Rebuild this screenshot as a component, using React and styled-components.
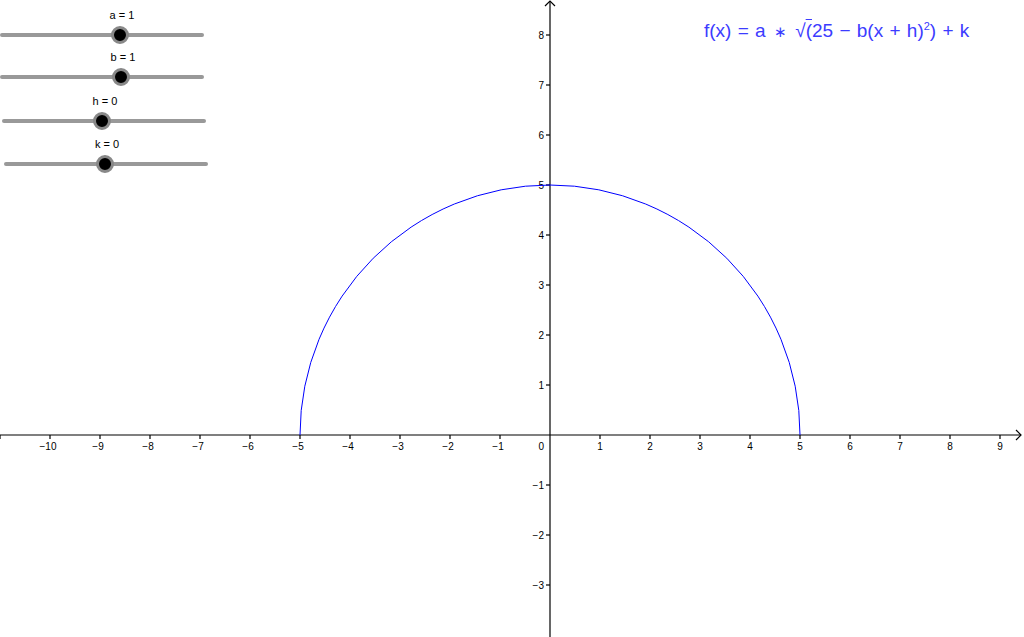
import React from 'react';
import styled, { createGlobalStyle } from 'styled-components';

const Global = createGlobalStyle`
    html, body { margin: 0; padding: 0; background: #fff; }
    body { font-family: "Liberation Sans", Arial, sans-serif; overflow: hidden; }
`;

const Board = styled.div`
    position: relative;
    width: 1024px;
    height: 637px;
    background: #fff;
    overflow: hidden;
`;

const Graph = styled.svg`
    display: block;
`;

const Slider = styled.div`
    position: absolute;
    left: ${p => p.x}px;
    top: ${p => p.y}px;
    width: 204px;
    height: 4px;
    border-radius: 2px;
    background: #999;
`;

const Label = styled.div`
    position: absolute;
    left: ${p => p.at}px;
    top: -24px;
    transform: translateX(-50%);
    font-size: 11px;
    color: #000;
    white-space: nowrap;
`;

const Thumb = styled.div`
    position: absolute;
    left: ${p => p.at}px;
    top: 2px;
    width: 12px;
    height: 12px;
    margin: -9px 0 0 -9px;
    border-radius: 50%;
    background: #000;
    border: 3px solid #888;
`;

const Formula = styled.div`
    position: absolute;
    left: 704px;
    top: 20px;
    font-family: "Liberation Sans", Arial, sans-serif;
    font-size: 19px;
    word-spacing: 1px;
    color: #3c3cff;
    white-space: nowrap;
    sup { font-size: 11px; }
`;

const Star = styled.span`
    font-size: 15px;
    padding: 0 2px;
`;

const Root = styled.span`
    text-decoration: overline;
    text-decoration-thickness: 1px;
`;

const sliders = [
    { name: 'a = 1', x: 0, y: 33, at: 120, label: 122 },
    { name: 'b = 1', x: 0, y: 75, at: 121, label: 123 },
    { name: 'h = 0', x: 2, y: 119, at: 102, label: 105 },
    { name: 'k = 0', x: 4, y: 162, at: 105, label: 107 },
];

const OX = 550;
const OY = 435;
const U = 50;

const App = () => {
    const xs = [];
    for (let i = -11; i <= 9; i++) if (i !== 0) xs.push(i);
    const ys = [];
    for (let i = -3; i <= 8; i++) if (i !== 0) ys.push(i);
    const minus = n => (n < 0 ? '\u2212' + Math.abs(n) : String(n));

    return (
        <>
            <Global />
            <Board>
                <Graph width="1024" height="637" viewBox="0 0 1024 637">
                    <g stroke="#000" strokeWidth="1.2" fill="none">
                        <line x1="0" y1={OY} x2="1021" y2={OY} />
                        <polyline points="1016,430 1021,435 1016,440" />
                        <line x1={OX} y1="1" x2={OX} y2="637" />
                        <polyline points="545,6 550,1 555,6" />
                        {xs.map(i => (
                            <line key={'tx' + i} x1={OX + i * U} y1={OY} x2={OX + i * U} y2={OY + 4} />
                        ))}
                        {ys.map(i => (
                            <line key={'ty' + i} x1={OX - 4} y1={OY - i * U} x2={OX} y2={OY - i * U} />
                        ))}
                    </g>
                    <g fontFamily="Liberation Sans, Arial, sans-serif" fontSize="10" fill="#000">
                        {xs.filter(i => i >= -10).map(i => (
                            <text key={'lx' + i} x={OX + i * U - (i < 0 ? 2 : 0)} y={OY + 15} textAnchor="middle">{minus(i)}</text>
                        ))}
                        <text x={OX - 6} y={OY + 15} textAnchor="end">0</text>
                        {ys.map(i => (
                            <text key={'ly' + i} x={OX - 6} y={OY - i * U + 4} textAnchor="end">{minus(i)}</text>
                        ))}
                    </g>
                    <path d={`M ${OX - 5 * U} ${OY} A ${5 * U} ${5 * U} 0 0 1 ${OX + 5 * U} ${OY}`} stroke="#0000ff" strokeWidth="1" fill="none" />
                </Graph>

                {sliders.map(s => (
                    <Slider key={s.name} x={s.x} y={s.y}>
                        <Label at={s.label - s.x}>{s.name}</Label>
                        <Thumb at={s.at - s.x} />
                    </Slider>
                ))}

                <Formula>
                    f(x) = a <Star>∗</Star> √<Root>(</Root>25 − b(x + h)<sup>2</sup>) + k
                </Formula>
            </Board>
        </>
    );
};

export default App;
